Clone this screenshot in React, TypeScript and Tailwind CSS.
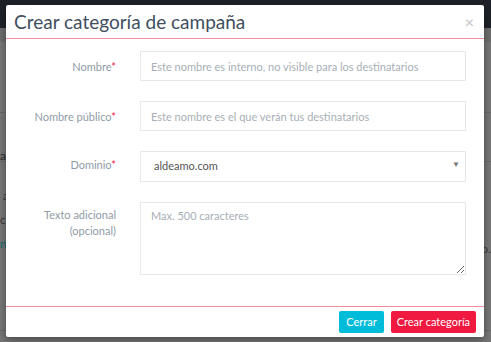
import { useState } from "react";

function Field({
  label,
  required,
  children,
  top = "pt-[8px]",
}: {
  label: React.ReactNode;
  required?: boolean;
  children: React.ReactNode;
  top?: string;
}) {
  return (
    <div className="flex items-start gap-[24px]">
      <label className={`w-[110px] shrink-0 text-right text-[11px] leading-[16px] text-[#909ba7] ${top}`}>
        {label}
        {required && <span className="text-[#f0193f]">*</span>}
      </label>
      <div className="flex-1">{children}</div>
    </div>
  );
}

export default function App() {
  const [domain, setDomain] = useState("aldeamo.com");

  return (
    <div className="relative h-[342px] w-[491px] overflow-hidden bg-[#777777] font-['Lato',sans-serif]">
      {/* page behind the overlay */}
      <div className="h-[28px] bg-[#1e2228]" />
      <div className="h-[14px] bg-[#6e6e6e]" />
      <div className="h-[71px] border-b border-[#6a6a6a]" />
      <div className="h-[49px] border-b border-[#6a6a6a] pt-[35px] text-[12px] leading-[16px] text-[#2a2a2a]">
        ac
      </div>
      <div className="flex flex-col pt-[22px] text-[12px] leading-[24px] text-[#3a3a3a]">
        <span>&nbsp;a</span>
        <span>ca</span>
        <span className="text-[#0b6f74]">n</span>
      </div>
      <div className="absolute left-0 right-0 top-[330px] border-t border-[#6a6a6a]" />
      <div className="absolute right-0 top-[240px] text-[12px] text-[#3a3a3a]">o.</div>

      {/* modal */}
      <div className="absolute left-[6px] top-[5px] flex h-[332px] w-[478px] flex-col rounded-[2px] bg-white shadow-[0_3px_9px_rgba(0,0,0,0.4)]">
        <div className="flex h-[34px] items-center justify-between border-b border-[#f28b9b] pl-[8px] pr-[10px]">
          <h4 className="text-[19px] leading-none text-[#3f4e60]">Crear categoría de campaña</h4>
          <button className="text-[16px] font-bold leading-none text-[#cfcfcf]">×</button>
        </div>

        <div className="flex flex-1 flex-col gap-[20px] pr-[18px] pt-[12px]">
          <Field label="Nombre" required>
            <input
              placeholder="Este nombre es interno, no visible para los destinatarios"
              className="h-[30px] w-full border border-[#e3e8ea] px-[10px] text-[11px] text-[#555] placeholder:text-[#a7afb6] focus:outline-none"
            />
          </Field>
          <Field label="Nombre público" required>
            <input
              placeholder="Este nombre es el que verán tus destinatarios"
              className="h-[30px] w-full border border-[#e3e8ea] px-[10px] text-[11px] text-[#555] placeholder:text-[#a7afb6] focus:outline-none"
            />
          </Field>
          <Field label="Dominio" required top="pt-[6px]">
            <div className="relative">
              <select
                value={domain}
                onChange={(e) => setDomain(e.target.value)}
                className="h-[31px] w-full appearance-none border border-[#e3e8ea] bg-white px-[13px] text-[11px] text-[#555] focus:outline-none"
              >
                <option>aldeamo.com</option>
              </select>
              <span className="pointer-events-none absolute right-[6px] top-[7px] text-[8px] text-[#777]">▼</span>
            </div>
          </Field>
          <Field label={<>Texto adicional<br />(opcional)</>} top="pt-[5px]">
            <textarea
              placeholder="Max. 500 caracteres"
              className="block h-[73px] w-full border border-[#e3e8ea] px-[10px] py-[5px] text-[11px] text-[#555] placeholder:text-[#a7afb6] focus:outline-none"
            />
          </Field>
        </div>

        <div className="flex h-[31px] items-center justify-end gap-[7px] border-t border-[#f28b9b] pr-[8px]">
          <button className="h-[22px] rounded-[2px] bg-[#00bcd9] px-[7px] text-[11px] text-white">Cerrar</button>
          <button className="h-[22px] rounded-[2px] bg-[#f0193f] px-[6px] text-[11px] text-white">Crear categoría</button>
        </div>
      </div>
    </div>
  );
}
